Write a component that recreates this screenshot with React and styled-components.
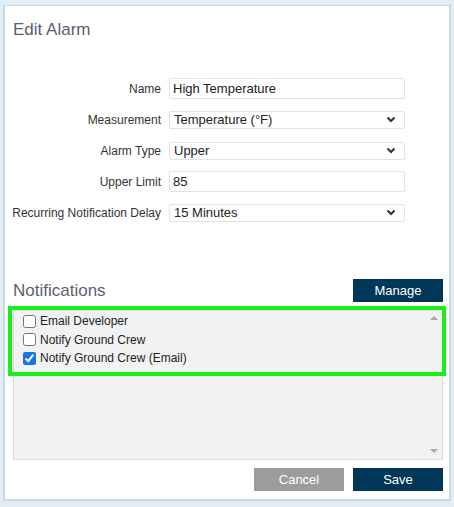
import React, { useState } from "react";
import styled, { createGlobalStyle } from "styled-components";

const GlobalStyle = createGlobalStyle`
  html, body {
    margin: 0;
    padding: 0;
    background: #e3edf3;
  }
  body {
    font-family: "Liberation Sans", Arial, sans-serif;
    width: 454px;
    height: 507px;
    overflow: hidden;
  }
`;

const FIELDS = [
  { label: "Name", type: "text", value: "High Temperature" },
  { label: "Measurement", type: "select", value: "Temperature (°F)" },
  { label: "Alarm Type", type: "select", value: "Upper" },
  { label: "Upper Limit", type: "text", value: "85" },
  { label: "Recurring Notification Delay", type: "select", value: "15 Minutes" },
];

const NOTIFICATIONS = [
  { name: "Email Developer", checked: false },
  { name: "Notify Ground Crew", checked: false },
  { name: "Notify Ground Crew (Email)", checked: true },
];

const Chevron = () => (
  <svg width="10" height="7" viewBox="0 0 10 7">
    <path d="M1.5 1.5 L5 5 L8.5 1.5" fill="none" stroke="#333" strokeWidth="2" />
  </svg>
);

const FieldRow = ({ field }) => (
  <>
    <Label>{field.label}</Label>
    {field.type === "text" ? (
      <TextInput defaultValue={field.value} />
    ) : (
      <SelectBox>
        <span>{field.value}</span>
        <Chevron />
      </SelectBox>
    )}
  </>
);

export default function App() {
  const [items, setItems] = useState(NOTIFICATIONS);

  const toggle = (index) => {
    setItems(items.map((it, i) => (i === index ? { ...it, checked: !it.checked } : it)));
  };

  return (
    <>
      <GlobalStyle />
      <Dialog>
        <Title>Edit Alarm</Title>
        <Form>
          {FIELDS.map((f) => (
            <FieldRow key={f.label} field={f} />
          ))}
        </Form>
        <SectionHeader>
          <SectionTitle>Notifications</SectionTitle>
          <Button>Manage</Button>
        </SectionHeader>
        <ListWrap>
          <List>
            {items.map((it, i) => (
              <ListItem key={it.name}>
                <Check type="checkbox" checked={it.checked} onChange={() => toggle(i)} />
                {it.name}
              </ListItem>
            ))}
          </List>
          <ScrollArrow up />
          <ScrollArrow />
          <Highlight />
        </ListWrap>
        <Footer>
          <Button gray>Cancel</Button>
          <Button>Save</Button>
        </Footer>
      </Dialog>
    </>
  );
}

const Dialog = styled.div`
  box-sizing: border-box;
  margin: 5px 3px 0 3px;
  width: 448px;
  height: 496px;
  background: #fff;
  border: 2px solid #c3dcea;
  border-top-width: 1px;
  padding: 0 6px 0 8px;
  display: flex;
  flex-direction: column;
`;

const Title = styled.div`
  font-size: 17px;
  color: #5a5f70;
  line-height: 20px;
  padding-top: 14px;
`;

const SectionTitle = styled(Title)`
  padding-top: 0;
  line-height: 22px;
`;

const Form = styled.div`
  display: grid;
  grid-template-columns: 150px 236px;
  grid-auto-rows: 31px;
  column-gap: 8px;
  align-items: center;
  margin-top: 33px;
  margin-left: -2px;
`;

const Label = styled.div`
  text-align: right;
  font-size: 12px;
  color: #333;
  white-space: nowrap;
`;

const TextInput = styled.input`
  box-sizing: border-box;
  height: 21px;
  border: 1px solid #e2e2e2;
  border-radius: 2px;
  padding: 0 3px;
  font-family: "Liberation Sans", Arial, sans-serif;
  font-size: 13px;
  color: #222;
  outline: none;
`;

const SelectBox = styled.div`
  box-sizing: border-box;
  height: 18px;
  border: 1px solid #e2e2e2;
  border-radius: 2px;
  padding: 0 8px 0 4px;
  font-size: 13px;
  color: #222;
  display: flex;
  align-items: center;
  justify-content: space-between;
`;

const SectionHeader = styled.div`
  display: flex;
  justify-content: space-between;
  align-items: flex-end;
  margin-top: 51px;
`;

const Button = styled.button`
  width: 90px;
  height: 23px;
  border: none;
  background: ${(p) => (p.gray ? "#9c9c9c" : "#003658")};
  color: #fff;
  font-family: "Liberation Sans", Arial, sans-serif;
  font-size: 13px;
  padding: 0;
  cursor: pointer;
`;

const ListWrap = styled.div`
  position: relative;
  margin-top: 8px;
  width: 430px;
  height: 150px;
`;

const List = styled.ul`
  box-sizing: border-box;
  list-style: none;
  margin: 0;
  padding: 1px 0 0 9px;
  height: 100%;
  background: #f2f2f2;
  border: 1px solid #dcdcdc;
`;

const ListItem = styled.li`
  display: flex;
  align-items: center;
  height: 18.5px;
  font-size: 12px;
  color: #222;
`;

const Check = styled.input`
  width: 13px;
  height: 13px;
  margin: 0 4px 0 0;
  accent-color: #1a73e8;
`;

const ScrollArrow = styled.div`
  position: absolute;
  right: 5px;
  ${(p) => (p.up ? "top: 6px;" : "bottom: 7px;")}
  width: 0;
  height: 0;
  border-left: 4px solid transparent;
  border-right: 4px solid transparent;
  ${(p) => (p.up ? "border-bottom: 4px solid #a8a8a8;" : "border-top: 4px solid #a8a8a8;")}
`;

const Highlight = styled.div`
  position: absolute;
  left: -5px;
  top: -4px;
  width: 438px;
  height: 70px;
  box-sizing: border-box;
  border: 4px solid #19ee19;
  pointer-events: none;
`;

const Footer = styled.div`
  display: flex;
  justify-content: flex-end;
  gap: 9px;
  margin-top: 8px;
`;
